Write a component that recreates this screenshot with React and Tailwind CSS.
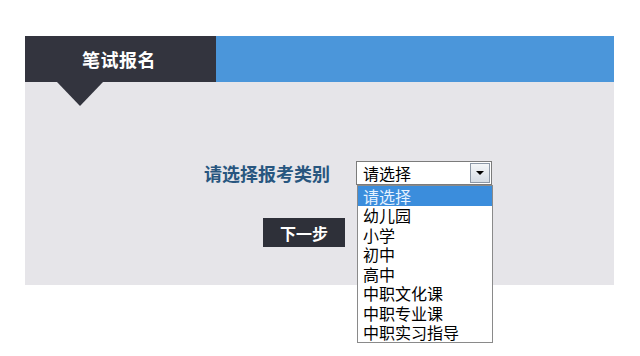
import React from "react";

const cjk = { fontFamily: '"Noto Sans CJK SC", "Noto Sans", sans-serif' };

const items = ["请选择", "幼儿园", "小学", "初中", "高中", "中职文化课", "中职专业课", "中职实习指导"];

export default function App() {
  return (
    <div className="w-[640px] h-[356px] bg-white pt-[36px] pl-[25px] overflow-hidden" style={cjk}>
      <div className="w-[589px] relative">
        <div className="flex h-[46px]">
          <div className="w-[191px] bg-[#33343e] pl-[57px] flex items-center">
            <span className="text-white text-[18px] font-bold leading-none tracking-[0.5px]">笔试报名</span>
          </div>
          <div className="flex-1 bg-[#4b96da]" />
        </div>
        <div className="absolute left-[32px] top-[46px] w-0 h-0 border-l-[23px] border-r-[23px] border-t-[24px] border-l-transparent border-r-transparent border-t-[#33343e] z-10" />
        <div className="h-[203px] bg-[#e6e5e9] pt-[79px] relative">
          <div className="flex items-center pl-[179px]">
            <span className="text-[18px] font-bold text-[#28567f] leading-none w-[152px]">请选择报考类别</span>
            <div className="relative">
              <div className="w-[136px] h-[24px] bg-white border border-[#7b7b7b] flex items-center">
                <span className="flex-1 pl-[6px] text-[16px] leading-none text-black">请选择</span>
                <div className="w-[20px] h-[20px] mr-[1px] bg-gradient-to-b from-[#f4f6f8] to-[#d6dde5] border border-[#8d98a6] flex items-center justify-center">
                  <div className="w-0 h-0 border-l-[4px] border-r-[4px] border-t-[4px] border-l-transparent border-r-transparent border-t-black" />
                </div>
              </div>
              <div className="absolute left-[1px] top-[24px] w-[136px] bg-white border border-[#8a8a8a] z-20 flex flex-col">
                {items.map((t, i) => (
                  <div
                    key={t}
                    className={
                      i === 0
                        ? "h-[19.5px] flex items-center pl-[5px] text-[16px] leading-none bg-[#3b8ddc] text-[#e6f2ff]"
                        : "h-[19.5px] flex items-center pl-[5px] text-[16px] leading-none text-black"
                    }
                  >
                    {t}
                  </div>
                ))}
              </div>
            </div>
          </div>
          <div className="pl-[238px] mt-[33px]">
            <div className="w-[82px] h-[29px] bg-[#2e3039] flex items-center justify-center">
              <span className="text-white text-[16px] font-bold leading-none">下一步</span>
            </div>
          </div>
        </div>
      </div>
    </div>
  );
}
